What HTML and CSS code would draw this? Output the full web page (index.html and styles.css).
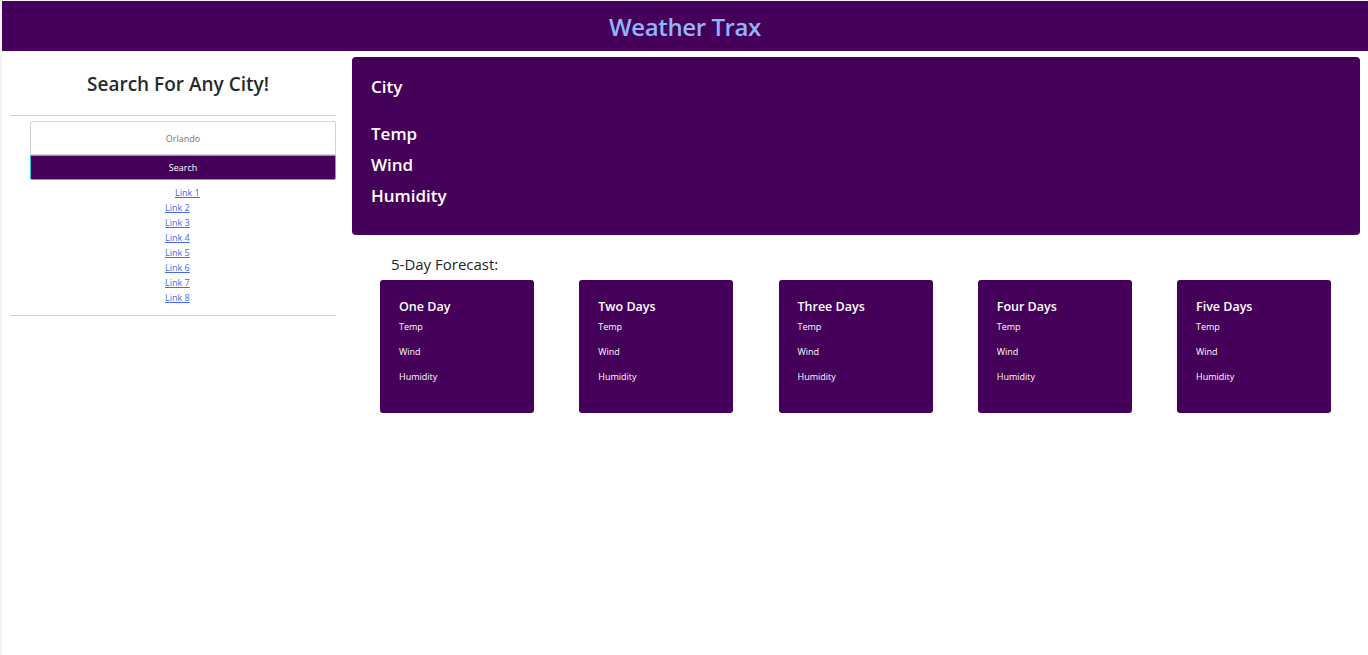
FILE: index.html
```html
<!DOCTYPE html>
<html>
<head>
<meta charset="utf-8">
<link rel="stylesheet" href="styles.css">
</head>
<body>
<div class="page">
  <header class="topbar"><h1 class="brand">Weather Trax</h1></header>
  <div class="main">
    <aside class="side">
      <h2 class="side-title">Search For Any City!</h2>
      <hr class="rule">
      <form class="search">
        <input class="search-input" type="text" placeholder="Orlando">
        <button class="search-btn" type="button">Search</button>
      </form>
      <ul class="links">
        <li class="first"><a href="#">Link 1</a></li>
        <li><a href="#">Link 2</a></li>
        <li><a href="#">Link 3</a></li>
        <li><a href="#">Link 4</a></li>
        <li><a href="#">Link 5</a></li>
        <li><a href="#">Link 6</a></li>
        <li><a href="#">Link 7</a></li>
        <li><a href="#">Link 8</a></li>
      </ul>
      <hr class="rule">
    </aside>
    <section class="content">
      <div class="current">
        <h3 class="cur-city">City</h3>
        <h3 class="cur-line">Temp</h3>
        <h3 class="cur-line">Wind</h3>
        <h3 class="cur-line">Humidity</h3>
      </div>
      <h4 class="fc-label">5-Day Forecast:</h4>
      <div class="fc-row">
        <div class="fc-card"><h5 class="fc-title">One Day</h5><p>Temp</p><p>Wind</p><p>Humidity</p></div>
        <div class="fc-card"><h5 class="fc-title">Two Days</h5><p>Temp</p><p>Wind</p><p>Humidity</p></div>
        <div class="fc-card"><h5 class="fc-title">Three Days</h5><p>Temp</p><p>Wind</p><p>Humidity</p></div>
        <div class="fc-card"><h5 class="fc-title">Four Days</h5><p>Temp</p><p>Wind</p><p>Humidity</p></div>
        <div class="fc-card"><h5 class="fc-title">Five Days</h5><p>Temp</p><p>Wind</p><p>Humidity</p></div>
      </div>
    </section>
  </div>
</div>
</body>
</html>
```
FILE: styles.css
```css
* { box-sizing: border-box; }
html, body { margin: 0; padding: 0; }
body {
  background: #f4f4f4;
  font-family: "Open Sans", "Noto Sans", sans-serif;
  color: #212529;
}
.page {
  margin: 1px 0 0 2px;
  background: #fff;
  min-height: 654px;
}
.topbar {
  height: 50px;
  background: #45005a;
  display: flex;
  align-items: center;
  justify-content: center;
}
.brand {
  margin: 0;
  font-size: 24px;
  font-weight: 600;
  color: #8fb5fb;
  letter-spacing: -0.4px;
}
.main {
  display: flex;
  gap: 16px;
  padding: 0 8px 0 8px;
}
.side {
  width: 326px;
  flex: none;
}
.side-title {
  margin: 21px 0 0;
  padding-left: 10px;
  text-align: center;
  font-size: 19px;
  font-weight: 600;
  line-height: 24px;
  color: #262a2e;
}
.rule {
  margin: 0;
  border: 0;
  border-top: 1px solid #cfcfcf;
}
.side-title + .rule { margin-top: 19px; }
.search {
  margin: 5px 0 0 20px;
  display: flex;
  flex-direction: column;
}
.search-input {
  height: 34px;
  border: 1px solid #ced4da;
  border-radius: 2px 2px 0 0;
  text-align: center;
  font-family: inherit;
  font-size: 9px;
  color: #495057;
}
.search-input::placeholder { color: #6c757d; }
.search-btn {
  height: 25px;
  background: #45005a;
  border: 1px solid #2bc0e4;
  border-radius: 0 0 2px 2px;
  color: #fff;
  font-family: inherit;
  font-size: 9px;
  padding: 0;
}
.links {
  list-style: none;
  margin: 5px 0 0;
  padding: 0 0 10px 155px;
  font-size: 9px;
  line-height: 15px;
}
.links li.first { padding-left: 10px; }
.links a { color: #3d6cf0; text-decoration: underline; }
.content {
  flex: 1;
  min-width: 0;
}
.current {
  margin-top: 6px;
  height: 178px;
  background: #45005a;
  border-radius: 4px;
  padding: 14px 19px;
  color: #fff;
}
.current h3 {
  margin: 0;
  font-size: 17px;
  font-weight: 600;
  line-height: 31px;
}
.current .cur-city { margin-bottom: 16px; }
.fc-label {
  margin: 19px 0 0 39px;
  font-size: 15px;
  font-weight: 400;
  line-height: 20px;
}
.fc-row {
  display: flex;
  justify-content: space-between;
  width: 951px;
  margin: 6px 0 0 28px;
}
.fc-card {
  width: 154px;
  height: 133px;
  background: #45005a;
  border-radius: 3px;
  padding: 18px 19px;
  color: #fff;
}
.fc-title {
  margin: 0 0 4px;
  font-size: 12.5px;
  font-weight: 600;
  line-height: 18px;
}
.fc-card p {
  margin: 0 0 11px;
  font-size: 9px;
  line-height: 14px;
}
```
